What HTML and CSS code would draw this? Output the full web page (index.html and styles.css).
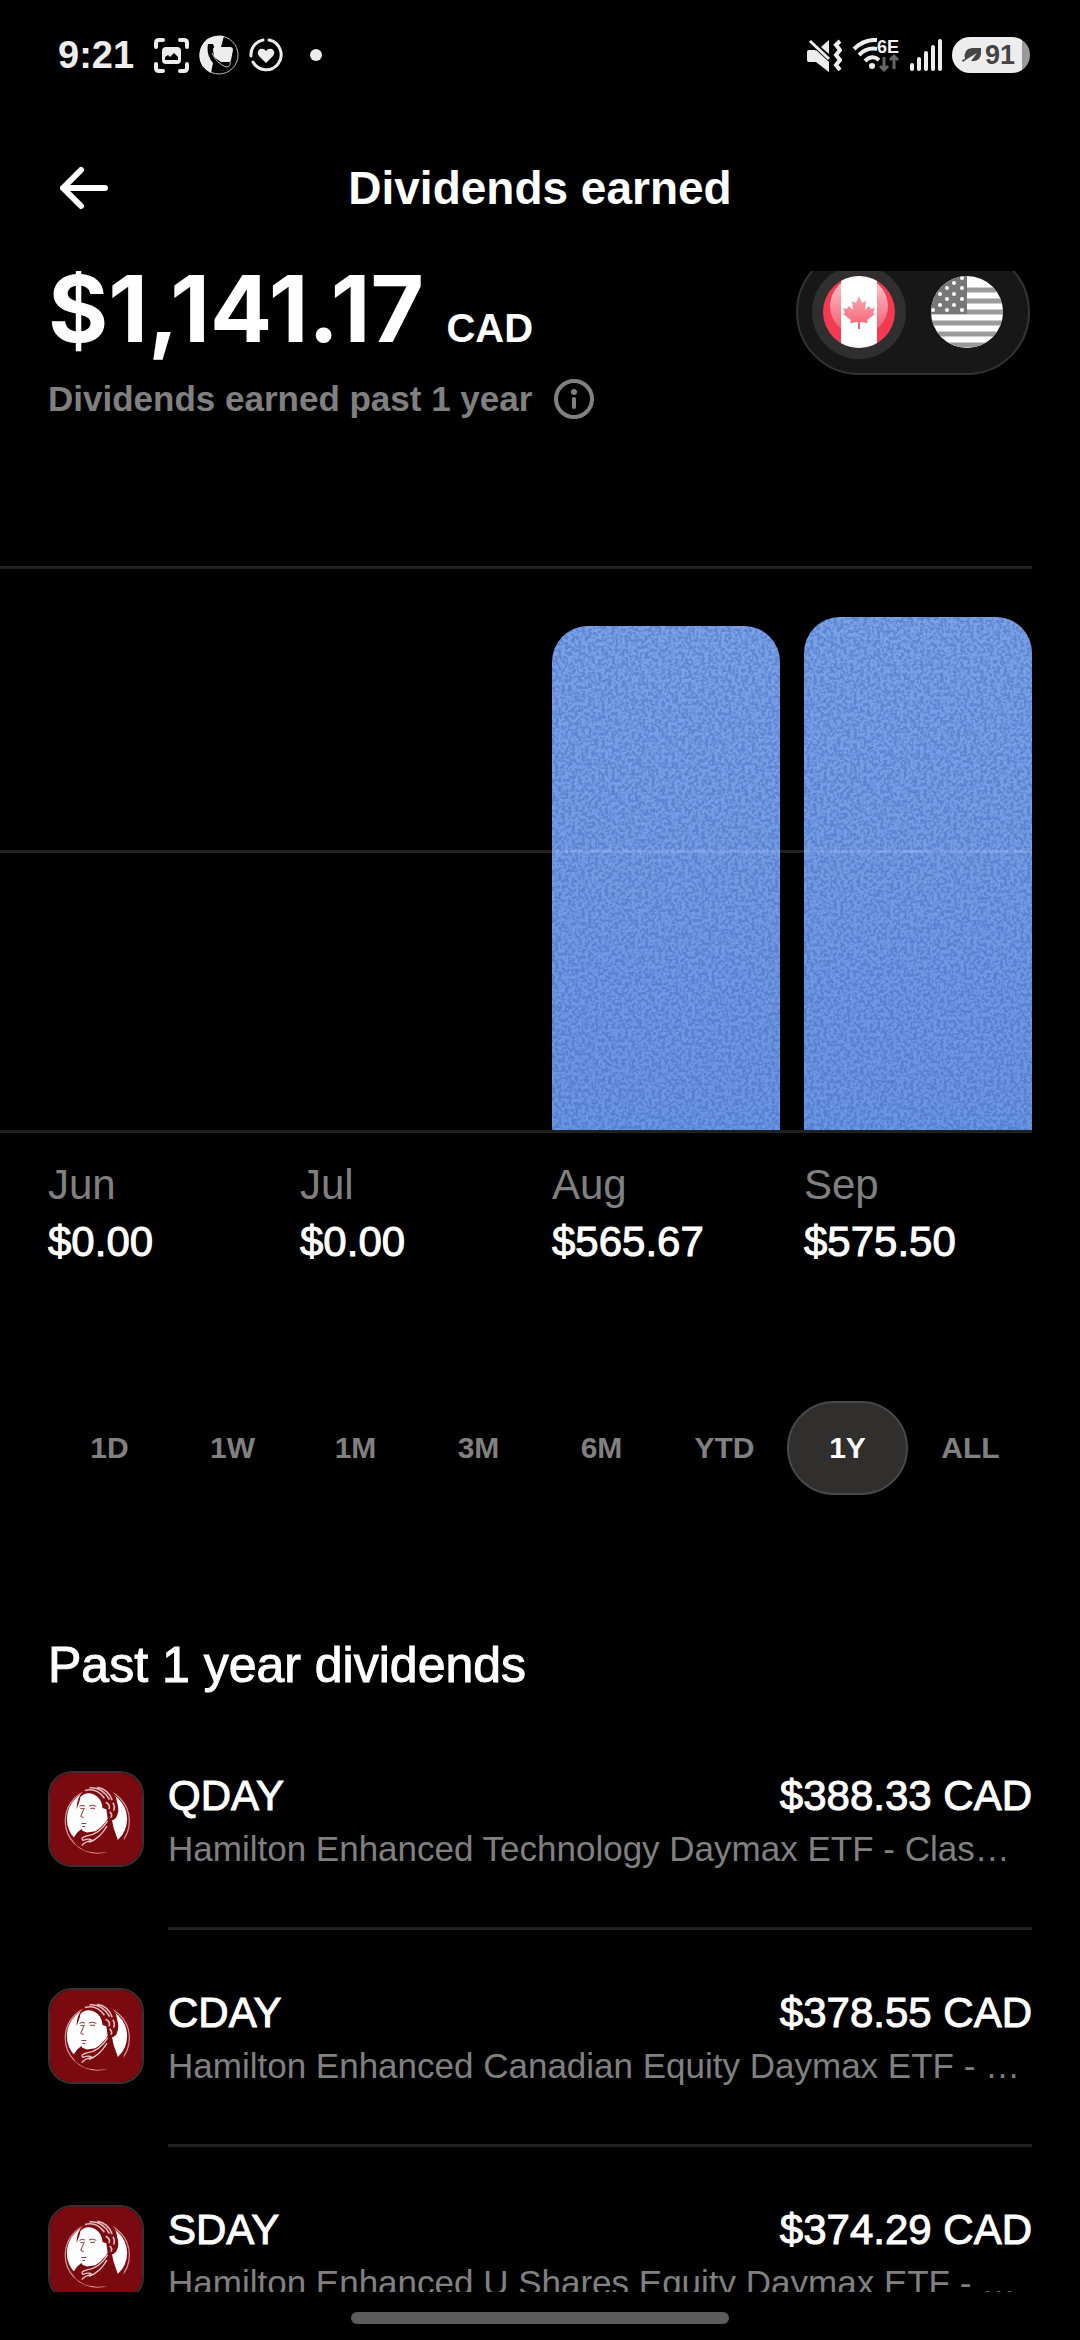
FILE: index.html
```
<!DOCTYPE html>
<html lang="en">
<head>
    <meta charset="UTF-8">
    <meta name="viewport" content="width=device-width, initial-scale=1.0">
    <title>Dividends earned</title>
    <link rel="stylesheet" href="styles.css">
</head>
<body>
    <!-- shared drawings -->
    <svg class="defs" width="0" height="0" aria-hidden="true">
        <filter id="grain" x="0" y="0" width="100%" height="100%" color-interpolation-filters="sRGB">
            <feTurbulence type="fractalNoise" baseFrequency="0.3" numOctaves="2" seed="4"/>
            <feColorMatrix values="0 0 0 0 0.22  0 0 0 0 0.38  0 0 0 0 0.72  6 0 0 0 -2.6"/>
        </filter>
        <symbol id="hamilton" viewBox="0 0 284 284">
            <rect width="284" height="284" fill="#7b0a10"/>
            <circle cx="146" cy="148" r="99" fill="none" stroke="#d98a8c" stroke-width="4"/>
            <ellipse cx="145" cy="142" rx="93" ry="90" fill="#fff"/>
            <path d="M70 204 L84 184 L98 172 L150 170 L180 140 L190 138 L196 168 L210 208 L230 190 L224 226 L184 244 L146 246 L108 240 L80 222 Z" fill="#7b0a10"/>
            <path d="M82 112 Q82 76 102 58 Q112 40 132 38 Q162 34 184 52 Q204 64 207 90 Q216 118 204 138 Q196 148 184 146 L172 156 L150 126 L110 70 L90 90 Z" fill="#7b0a10"/>
            <path d="M94 74 Q110 56 136 66 Q160 78 162 108 L174 112 L178 142 Q164 164 140 180 L114 184 L100 178 Q94 172 96 162 L93 150 L86 140 L90 120 L88 100 Z" fill="#fff"/>
            <path d="M108 54 Q144 44 168 78 M122 46 Q160 42 184 82 M146 44 Q180 50 192 84 M172 90 Q188 98 182 112 M194 92 Q202 104 196 116 M184 120 Q194 128 188 138" fill="none" stroke="#e3b9ba" stroke-width="5"/>
            <path d="M91 103 Q98 98 108 102 M120 102 Q131 96 143 103 M94 110 H107 M124 109 H139 M104 112 L95 134 L104 138 M97 156 H112 M100 165 H108" fill="none" stroke="#8d2a2f" stroke-width="3"/>
            <path d="M178 148 Q152 190 114 194 Q92 200 102 208 Q122 200 130 208 Q108 212 98 224 M176 164 Q152 204 120 214" fill="none" stroke="#ecc9c9" stroke-width="4"/>
        </symbol>
    </svg>

    <div class="status-bar">
        <div class="status-left">
            <span class="time">9:21</span>
            <svg class="icon-capture" width="35" height="35" viewBox="0 0 35 35" fill="none" stroke="#ededed" stroke-width="4" stroke-linecap="round">
                <path d="M2 9V5Q2 2 5 2H9M26 2H30Q33 2 33 5V9M33 26V30Q33 33 30 33H26M9 33H5Q2 33 2 30V26"/>
                <rect x="8" y="9" width="19" height="17" rx="4" fill="#ededed" stroke="none"/>
                <path d="M11 22L11 19L14 17L16 19L20 15L24 19V22Z" fill="#000" stroke="none"/>
            </svg>
            <svg class="icon-phone" width="40" height="40" viewBox="0 0 40 40">
                <circle cx="20" cy="20" r="19" fill="#000" stroke="#bbb"/>
                <path d="M25 1Q8 -1 2 12Q-4 30 12 38L14 28Q7 20 9 9L14 9L17 17L19 14L22 12Z" fill="#ededed"/>
                <path d="M17 12H31Q34 12 34 15L32 25Q32 27 29 27H22L15 22L14 14Q14 12 17 12Z" fill="#ededed"/>
                <path d="M13 18Q17 28 27 32Q32 32 31 27" fill="none" stroke="#bbb"/>
            </svg>
            <svg class="icon-heart" width="34" height="34" viewBox="0 0 34 34">
                <path d="M20 2A15 15 0 1 1 4 24M2 18A15 15 0 0 1 14 2" fill="none" stroke="#ededed" stroke-width="3" stroke-linecap="round"/>
                <path d="M17 25L10 18Q7 14 11 11Q15 10 17 13Q19 10 23 11Q27 14 24 18Z" fill="#ededed"/>
            </svg>
            <span class="dot"></span>
        </div>
        <div class="status-right">
            <svg width="35" height="33" viewBox="0 0 35 33">
                <path d="M2 11H8L22 24V33L10 23H2Q0 23 0 21V13Q0 11 2 11ZM14 8L22 1V15Z" fill="#ededed"/>
                <path d="M9 11L22 23V33L9 23Z" fill="#ededed"/>
                <path d="M3 2L22 20" stroke="#ededed" stroke-width="3"/>
                <path d="M33 2L29 6L33 11L29 16L33 21L29 26L33 31" fill="none" stroke="#ededed" stroke-width="4"/>
            </svg>
            <svg class="icon-wifi" width="48" height="34" viewBox="0 0 48 34" fill="none">
                <path d="M2 11Q12 1 25 2M7 17Q15 9 25 11M13 23Q20 16 27 22" stroke="#ededed" stroke-width="4"/>
                <circle cx="20" cy="28" r="3" fill="#ededed"/>
                <text x="25" y="15" fill="#ededed" font-size="18" font-weight="bold">6E</text>
                <path d="M32 19V32M28 28L32 32L36 28M42 31V18M38 22L42 18L46 22" stroke="#666" stroke-width="3"/>
            </svg>
            <svg class="icon-signal" width="32" height="34" viewBox="0 0 32 34" stroke="#ededed" stroke-width="4" stroke-linecap="round">
                <path d="M2 27V31M9 21V31M16 15V31M23 9V31M30 3V31"/>
            </svg>
            <span class="battery">
                <svg width="20" height="16" viewBox="0 0 20 16">
                    <path d="M3 12Q1 2 10 1H19V7Q18 15 9 14L15 6L5 12L1 15L0 13Z" fill="#444"/>
                </svg>
                91
            </span>
        </div>
    </div>

    <header class="top-bar">
        <button class="back" aria-label="Back">
            <svg width="50" height="44" viewBox="0 0 50 44" fill="none" stroke="#fff" stroke-width="6" stroke-linecap="round" stroke-linejoin="round">
                <path d="M23 4L5 22L23 40M5 22H47"/>
            </svg>
        </button>
        <h1>Dividends earned</h1>
    </header>

    <main>
        <section class="summary">
            <div>
                <p class="total"><span class="total-value">$1,141.17</span> <span class="total-currency">CAD</span></p>
                <p class="caption">
                    Dividends earned past 1 year
                    <button class="info" aria-label="More information">
                        <svg width="40" height="40" viewBox="0 0 40 40">
                            <circle cx="20" cy="20" r="18" fill="none" stroke="#808080" stroke-width="4"/>
                            <circle cx="20" cy="13" r="3" fill="#808080"/>
                            <path d="M20 20V28" stroke="#808080" stroke-width="4" stroke-linecap="round"/>
                        </svg>
                    </button>
                </p>
            </div>
            <div class="currency">
                <button class="flag active" aria-label="CAD">
                    <svg width="72" height="72" viewBox="0 0 72 72">
                        <defs>
                            <clipPath id="round"><circle cx="36" cy="36" r="36"/></clipPath>
                            <linearGradient id="gloss" x1="0" y1="0" x2="0" y2="1">
                                <stop offset="0" stop-color="#fff" stop-opacity="0.75"/>
                                <stop offset="1" stop-color="#fff" stop-opacity="0.12"/>
                            </linearGradient>
                        </defs>
                        <g clip-path="url(#round)">
                            <rect width="72" height="72" fill="#f33a52"/>
                            <rect x="18" width="36" height="72" fill="#fff"/>
                            <path d="M36 20L39 27L43 25L42 34L46 30L48 33L52 32L50 37L52 38L44 44L45 47L37 46V53H35V46L27 47L28 44L20 38L22 37L20 32L24 33L26 30L30 34L29 25L33 27Z" fill="#f33a52"/>
                            <ellipse cx="36" cy="30" rx="29" ry="29" fill="url(#gloss)"/>
                        </g>
                    </svg>
                </button>
                <button class="flag" aria-label="USD">
                    <svg width="72" height="72" viewBox="0 0 72 72">
                        <g clip-path="url(#round)">
                            <rect width="72" height="72" fill="#fff"/>
                            <path d="M0 14H72M0 25H72M0 36H72M0 47H72M0 58H72M0 69H72" stroke="#9b9b9b" stroke-width="5"/>
                            <rect width="36" height="38" fill="#777"/>
                            <g fill="#fff">
                                <circle cx="31" cy="2" r="2"/><circle cx="23" cy="7" r="2"/><circle cx="31" cy="12" r="2"/>
                                <circle cx="16" cy="12" r="2"/><circle cx="9" cy="18" r="2"/><circle cx="23" cy="18" r="2"/>
                                <circle cx="16" cy="23" r="2"/><circle cx="31" cy="23" r="2"/><circle cx="9" cy="29" r="2"/>
                                <circle cx="23" cy="29" r="2"/><circle cx="2" cy="34" r="2"/><circle cx="16" cy="34" r="2"/>
                                <circle cx="31" cy="34" r="2"/>
                            </g>
                        </g>
                    </svg>
                </button>
            </div>
        </section>

        <section class="chart">
            <div class="plot">
                <div class="bar" style="height: 0%"></div>
                <div class="bar" style="height: 0%"></div>
                <div class="bar" style="height: 89.9%"><svg width="100%" height="100%"><rect width="100%" height="100%" filter="url(#grain)"/></svg></div>
                <div class="bar" style="height: 91.5%"><svg width="100%" height="100%"><rect width="100%" height="100%" filter="url(#grain)"/></svg></div>
            </div>
            <dl class="months">
                <div><dt>Jun</dt><dd>$0.00</dd></div>
                <div><dt>Jul</dt><dd>$0.00</dd></div>
                <div><dt>Aug</dt><dd>$565.67</dd></div>
                <div><dt>Sep</dt><dd>$575.50</dd></div>
            </dl>
        </section>

        <div class="ranges">
            <button>1D</button>
            <button>1W</button>
            <button>1M</button>
            <button>3M</button>
            <button>6M</button>
            <button>YTD</button>
            <button class="active">1Y</button>
            <button>ALL</button>
        </div>

        <h2>Past 1 year dividends</h2>
        <ul class="holdings">
            <li>
                <svg class="logo" aria-hidden="true"><use href="#hamilton"/></svg>
                <div class="holding">
                    <div class="holding-top"><span>QDAY</span><span>$388.33 CAD</span></div>
                    <p>Hamilton Enhanced Technology Daymax ETF - Clas…</p>
                </div>
            </li>
            <li>
                <svg class="logo" aria-hidden="true"><use href="#hamilton"/></svg>
                <div class="holding">
                    <div class="holding-top"><span>CDAY</span><span>$378.55 CAD</span></div>
                    <p>Hamilton Enhanced Canadian Equity Daymax ETF - …</p>
                </div>
            </li>
            <li>
                <svg class="logo" aria-hidden="true"><use href="#hamilton"/></svg>
                <div class="holding">
                    <div class="holding-top"><span>SDAY</span><span>$374.29 CAD</span></div>
                    <p>Hamilton Enhanced U Shares Equity Daymax ETF - …</p>
                </div>
            </li>
        </ul>
    </main>

    <div class="home-bar"><span></span></div>
</body>
</html>
```
FILE: styles.css
```
* {
    box-sizing: border-box;
}
body {
    margin: 0;
    height: 100vh;
    display: flex;
    flex-direction: column;
    overflow: hidden;
    background-color: #000;
    color: #fff;
    font-family: "Liberation Sans", Arial, sans-serif;
}
h1, h2, p, dl, dd, ul {
    margin: 0;
    padding: 0;
}
button {
    background: none;
    border: none;
    padding: 0;
    color: inherit;
    font-family: inherit;
    cursor: pointer;
}
svg {
    display: block;
}
.defs {
    position: absolute;
}

/* status bar */
.status-bar {
    flex: none;
    height: 104px;
    padding: 6px 50px 0 58px;
    display: flex;
    justify-content: space-between;
    align-items: center;
    color: #ededed;
}
.status-left, .status-right {
    display: flex;
    align-items: center;
}
.status-left {
    gap: 10px;
}
.status-right {
    gap: 10px;
}
.time {
    font-size: 38px;
    font-weight: bold;
    margin-right: 10px;
}
.dot {
    width: 12px;
    height: 12px;
    margin-left: 17px;
    border-radius: 50%;
    background-color: #ededed;
}
.battery {
    display: flex;
    align-items: center;
    gap: 3px;
    height: 36px;
    padding: 0 15px 0 10px;
    border-radius: 18px;
    background: linear-gradient(to right, #ededed 90%, #999 90%);
    color: #444;
    font-size: 27px;
    font-weight: bold;
}

/* title bar */
.top-bar {
    flex: none;
    height: 167px;
    padding: 0 58px;
    display: grid;
    grid-template-columns: 50px 1fr 50px;
    align-items: center;
    text-align: center;
}
h1 {
    font-size: 46px;
    font-weight: bold;
}

main {
    flex: 1;
    min-height: 0;
    overflow: hidden;
}

/* total, scrolled a little under the title bar */
.summary {
    margin-top: -22px;
    padding: 0 50px 0 48px;
    display: flex;
    justify-content: space-between;
    align-items: flex-start;
}
.total {
    padding-top: 18px;
    line-height: 84px;
    font-weight: bold;
}
.total-value {
    font-family: Inter, sans-serif;
    font-size: 92px;
}
.total-currency {
    margin-left: 18px;
    font-size: 40px;
}
.caption {
    display: flex;
    align-items: center;
    gap: 22px;
    color: #808080;
    font-size: 35px;
    font-weight: bold;
    line-height: 40px;
}
.currency {
    display: flex;
    gap: 14px;
    padding: 14px;
    border: 2px solid #333;
    border-radius: 63px;
    background-color: #171717;
}
.flag {
    width: 94px;
    height: 94px;
    padding: 11px;
    border-radius: 50%;
}
.flag.active {
    background-color: #2f2f2f;
}

/* bar chart */
.chart {
    padding-top: 147px;
}
.plot {
    position: relative;
    height: 567px;
    margin-right: 48px;
    padding-left: 48px;
    border-top: 3px solid #202020;
    border-bottom: 3px solid #202020;
    display: grid;
    grid-template-columns: repeat(4, 1fr);
    gap: 24px;
    align-items: end;
}
.plot::after {
    content: "";
    position: absolute;
    left: 0;
    right: 0;
    top: 50%;
    height: 3px;
    background-color: rgba(255, 255, 255, 0.13);
}
.bar {
    overflow: hidden;
    border-radius: 36px 36px 0 0;
    background: linear-gradient(#7ba1e7, #6a95e2);
}
.bar svg {
    opacity: 0.4;
}
.months {
    display: grid;
    grid-template-columns: repeat(4, 1fr);
    gap: 24px;
    padding: 23px 48px 0;
    font-size: 42px;
    line-height: 57px;
}
.months dt {
    color: #808080;
}
.months dd, .holding-top, h2 {
    -webkit-text-stroke: 1px #fff;
}

/* period picker */
.ranges {
    display: grid;
    grid-template-columns: repeat(8, 1fr);
    margin: 131px 48px 0;
}
.ranges button {
    height: 94px;
    margin: 0 1px;
    border-radius: 47px;
    color: #808080;
    font-size: 30px;
    font-weight: bold;
}
.ranges .active {
    border: 2px solid #484848;
    background-color: #302f2e;
    color: #fff;
}

/* dividend list */
h2 {
    margin: 138px 48px 16px;
    font-size: 50px;
    font-weight: normal;
    line-height: 64px;
}
.holdings {
    list-style: none;
    padding: 0 48px;
}
.holdings li {
    display: flex;
    gap: 24px;
    padding-top: 58px;
}
.logo {
    flex: none;
    width: 96px;
    height: 96px;
    border: 2px solid #3a3032;
    border-radius: 24px;
}
.holding {
    flex: 1;
    min-width: 0;
    padding-bottom: 50px;
    border-bottom: 3px solid #202020;
}
.holding-top {
    display: flex;
    justify-content: space-between;
    font-size: 42px;
    line-height: 50px;
}
.holding p {
    color: #808080;
    font-size: 35px;
    line-height: 56px;
    white-space: nowrap;
}

/* gesture bar */
.home-bar {
    flex: none;
    height: 48px;
    padding-top: 20px;
}
.home-bar span {
    display: block;
    width: 35%;
    height: 12px;
    margin: 0 auto;
    border-radius: 6px;
    background-color: #5c5c5c;
}
```
